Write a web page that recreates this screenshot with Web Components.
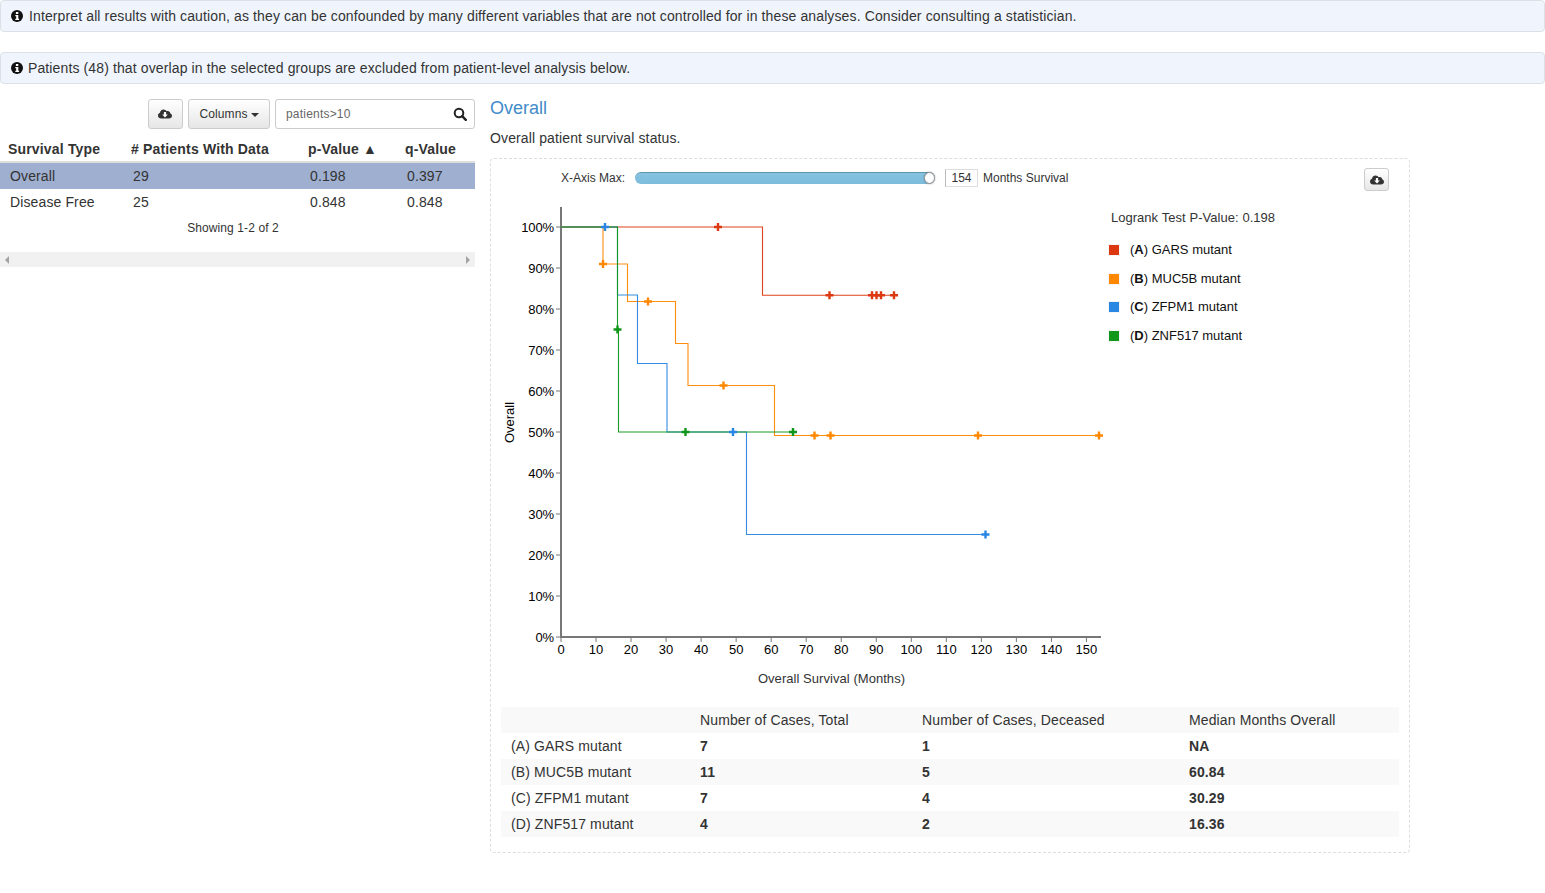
<!DOCTYPE html>
<html>
<head>
<meta charset="utf-8">
<style>
  html, body { margin: 0; background: #fff; }
  body { font-family: "Liberation Sans", Arial, sans-serif; font-size: 14px; color: #333; }
</style>
</head>
<body>
<study-page></study-page>

<script>
const INFO_ICON = `<svg width="12" height="12" viewBox="0 0 12 12"><circle cx="6" cy="6" r="6" fill="#111"/><rect x="4.9" y="2" width="2.4" height="2" fill="#fff"/><path d="M4.3 5h3v3.8h.8V10H4.3V8.8h.9V6.2h-.9z" fill="#fff"/></svg>`;
const CLOUD_ICON = `<svg width="14" height="12" viewBox="0 0 14 12"><path d="M3.2 10.5C1.4 10.5 0 9.2 0 7.5c0-1.3.8-2.4 2-2.8C2.1 2.9 3.6 1.5 5.5 1.5c1.3 0 2.5.7 3.1 1.8.4-.2.8-.3 1.2-.3 1.3 0 2.3 1 2.4 2.2 1 .4 1.8 1.4 1.8 2.6 0 1.7-1.4 2.7-3 2.7z" fill="#333"/><path d="M5.9 4h2.2v2.6h1.7L7 9.4 4.2 6.6h1.7z" fill="#fff"/></svg>`;

class StudyAlert extends HTMLElement {
    connectedCallback() {
        this.attachShadow({ mode: 'open' });
        this.shadowRoot.innerHTML = `
            <style>
                :host {
                    display: flex;
                    align-items: center;
                    box-sizing: border-box;
                    height: 32px;
                    padding: 0 10px;
                    background: #f0f5fd;
                    border: 1px solid #dde1e6;
                    border-radius: 4px;
                    font-size: 14px;
                    letter-spacing: .12px;
                    color: #333;
                }
                svg { margin-right: var(--icon-gap, 6px); flex: none; }
            </style>
            ${INFO_ICON}<slot></slot>
        `;
    }
}

class ToolButton extends HTMLElement {
    connectedCallback() {
        this.attachShadow({ mode: 'open' });
        this.shadowRoot.innerHTML = `
            <style>
                :host {
                    display: inline-flex;
                    align-items: center;
                    justify-content: center;
                    box-sizing: border-box;
                    border: 1px solid #ccc;
                    border-radius: 3px;
                    background: linear-gradient(#fff, #e6e6e6);
                    font-size: 12px;
                    letter-spacing: .1px;
                    color: #333;
                }
            </style>
            <slot></slot>
        `;
    }
}

class SurvivalTable extends HTMLElement {
    connectedCallback() {
        this.attachShadow({ mode: 'open' });
        this.shadowRoot.innerHTML = `
            <style>
                :host { display: block; width: 475px; font-size: 14px; letter-spacing: .12px; color: #333; }
                .toolbar {
                    display: flex;
                    justify-content: flex-end;
                    gap: 5px;
                    height: 30px;
                    margin-bottom: 8px;
                }
                tool-button.dl { width: 35px; height: 30px; }
                tool-button.dl svg { margin-left: -1px; }
                tool-button.cols { width: 82px; height: 30px; }
                .caret {
                    width: 0; height: 0; margin-left: 3px; margin-top: 2px;
                    border-left: 4px solid transparent;
                    border-right: 4px solid transparent;
                    border-top: 4px solid #333;
                }
                .search {
                    box-sizing: border-box;
                    width: 200px;
                    height: 30px;
                    border: 1px solid #ccc;
                    border-radius: 3px;
                    padding: 0 7px 0 10px;
                    display: flex;
                    align-items: center;
                    justify-content: space-between;
                    font-size: 12px;
                    letter-spacing: .2px;
                    color: #666;
                }
                .grid { display: grid; grid-template-columns: 123px 177px 97px 78px; }
                .head {
                    height: 24px;
                    border-bottom: 2px solid #ddd;
                    font-weight: bold;
                    font-size: 14px;
                    letter-spacing: .17px;
                    padding-left: 8px;
                    line-height: 24px;
                    white-space: nowrap;
                }
                .cell { height: 26px; line-height: 27px; padding-left: 10px; white-space: nowrap; }
                .sel { background: #9fafd0; }
                .foot { text-align: center; font-size: 12px; letter-spacing: .1px; line-height: 26px; margin-left: -9px; }
                .scroll {
                    height: 15px;
                    margin-top: 11px;
                    background: #f1f1f1;
                    display: flex;
                    justify-content: space-between;
                    align-items: center;
                    padding: 0 5px;
                }
                .arr { width: 0; height: 0; border-top: 4px solid transparent; border-bottom: 4px solid transparent; }
                .arr.l { border-right: 4px solid #a3a3a3; }
                .arr.r { border-left: 4px solid #a3a3a3; }
            </style>
            <div class="toolbar">
                <tool-button class="dl">${CLOUD_ICON}</tool-button>
                <tool-button class="cols">Columns<span class="caret"></span></tool-button>
                <div class="search">
                    <span>patients&gt;10</span>
                    <svg width="14" height="14" viewBox="0 0 14 14"><circle cx="6" cy="6" r="4.3" fill="none" stroke="#222" stroke-width="2"/><path d="M9.2 9.2l3.6 3.6" stroke="#222" stroke-width="2.4" stroke-linecap="round"/></svg>
                </div>
            </div>
            <div class="grid">
                <div class="head">Survival Type</div>
                <div class="head"># Patients With Data</div>
                <div class="head">p-Value &#9650;</div>
                <div class="head">q-Value</div>
                <div class="cell sel">Overall</div><div class="cell sel">29</div><div class="cell sel">0.198</div><div class="cell sel">0.397</div>
                <div class="cell">Disease Free</div><div class="cell">25</div><div class="cell">0.848</div><div class="cell">0.848</div>
            </div>
            <div class="foot">Showing 1-2 of 2</div>
            <div class="scroll"><span class="arr l"></span><span class="arr r"></span></div>
        `;
    }
}

// viewBox uses the page coordinates of the picture, so the curves read as measured
const SERIES = [
    { color: '#dc3912',
      path: [[561, 227], [762.5, 227], [762.5, 295.3], [894, 295.3]],
      marks: [[718, 227], [829.5, 295.3], [872, 295.3], [876.5, 295.3], [881, 295.3], [894, 295.3]] },
    { color: '#ff8800',
      path: [[561, 227], [603, 227], [603, 264], [627.5, 264], [627.5, 301.5], [675.5, 301.5], [675.5, 343.5], [688, 343.5], [688, 385.5], [774.5, 385.5], [774.5, 435.5], [1099, 435.5]],
      marks: [[603, 264], [648, 301.5], [723.5, 385.5], [814.5, 435.5], [830.5, 435.5], [978, 435.5], [1099, 435.5]] },
    { color: '#2986e2',
      path: [[561, 227], [617.5, 227], [617.5, 295], [637.5, 295], [637.5, 363.5], [667, 363.5], [667, 432], [746.5, 432], [746.5, 534.5], [985.5, 534.5]],
      marks: [[605, 227], [733, 432], [985.5, 534.5]] },
    { color: '#109618',
      path: [[561, 227], [617.5, 227], [617.5, 329.5], [618.5, 329.5], [618.5, 432], [793, 432]],
      marks: [[617.5, 329.5], [685.5, 432], [793, 432]] }
];

class KmPlot extends HTMLElement {
    connectedCallback() {
        this.attachShadow({ mode: 'open' });
        let ticks = '';
        for (let i = 0; i <= 10; i++) {
            const y = 637 - i * 41;
            ticks += `<path d="M556 ${y}h5" stroke="#777"/><text x="554" y="${y + 5}" text-anchor="end" letter-spacing="-.1">${i * 10}%</text>`;
        }
        for (let i = 0; i <= 15; i++) {
            const x = 561 + i * 35.03;
            ticks += `<path d="M${x} 637v5" stroke="#777"/><text x="${x}" y="654" text-anchor="middle">${i * 10}</text>`;
        }
        // censor marks sit above every line
        const lines = SERIES.map(s => {
            const d = 'M' + s.path.map(p => p.join(' ')).join('L');
            return `<path d="${d}" fill="none" stroke="${s.color}" stroke-width="1.1" opacity=".95"/>`;
        }).join('');
        const marks = SERIES.map(s => s.marks.map(([x, y]) =>
            `<path d="M${x - 4} ${y}h8M${x} ${y - 4}v8" stroke="${s.color}" stroke-width="2.4"/>`).join('')).join('');
        this.shadowRoot.innerHTML = `
            <style>
                :host { display: block; width: 604px; height: 500px; flex: none; }
                svg { display: block; font-family: "Liberation Sans", Arial, sans-serif; font-size: 13px; }
            </style>
            <svg width="604" height="500" viewBox="501 197 604 500">
                <path d="M561 207V637H1101" fill="none" stroke="#777" stroke-width="2"/>
                ${ticks}
                ${lines}
                ${marks}
                <text x="514" y="422.5" transform="rotate(-90 514 422.5)" text-anchor="middle" font-size="13">Overall</text>
                <text x="831.5" y="683" text-anchor="middle" fill="#333" letter-spacing=".05">Overall Survival (Months)</text>
            </svg>
        `;
    }
}

class KmLegend extends HTMLElement {
    connectedCallback() {
        this.attachShadow({ mode: 'open' });
        const rows = [['A', 'GARS', '#dc3912'], ['B', 'MUC5B', '#ff8800'], ['C', 'ZFPM1', '#2986e2'], ['D', 'ZNF517', '#109618']];
        this.shadowRoot.innerHTML = `
            <style>
                :host { display: block; font-size: 13px; color: #111; padding-left: 4px; }
                .rank { color: #333; margin: 0 0 0 2px; line-height: 16px; padding-top: 13px; margin-bottom: 9px; word-spacing: .4px; }
                .row { display: flex; align-items: center; height: 28.7px; }
                .box { width: 10px; height: 10px; margin: 1px 11px 0 0; outline: 1px solid rgba(0,0,0,.04); }
            </style>
            <div class="rank">Logrank Test P-Value: 0.198</div>
            ${rows.map(r => `<div class="row"><span class="box" style="background:${r[2]}"></span><span>(<b>${r[0]}</b>) ${r[1]} mutant</span></div>`).join('')}
        `;
    }
}

class XSlider extends HTMLElement {
    connectedCallback() {
        this.attachShadow({ mode: 'open' });
        this.shadowRoot.innerHTML = `
            <style>
                :host { display: flex; align-items: center; height: 38px; font-size: 12px; color: #333; padding-left: 60px; }
                .track {
                    position: relative;
                    box-sizing: border-box;
                    width: 300px;
                    height: 12px;
                    margin: 0 10px;
                    border-radius: 6px;
                    background: linear-gradient(#86c3e1, #7dbcdc);
                    border-top: 1px solid #5d95ad;
                }
                .knob {
                    position: absolute;
                    right: 0;
                    top: -1px;
                    box-sizing: border-box;
                    width: 11px;
                    height: 12px;
                    border-radius: 50%;
                    background: #fff;
                    border: 1px solid #999;
                    box-shadow: 0 0 2px rgba(0,0,0,.35);
                }
                .val {
                    box-sizing: border-box;
                    width: 33px;
                    height: 18px;
                    line-height: 16px;
                    text-align: center;
                    border: 1px solid #ddd;
                    border-left-color: #bbb;
                    margin-right: 5px;
                }
                tool-button { position: absolute; left: 873px; top: 9px; width: 25px; height: 23px; }
            </style>
            <span>X-Axis Max:</span>
            <div class="track"><span class="knob"></span></div>
            <div class="val">154</div>
            <span>Months Survival</span>
            <tool-button>${CLOUD_ICON}</tool-button>
        `;
    }
}

class StatsTable extends HTMLElement {
    connectedCallback() {
        this.attachShadow({ mode: 'open' });
        const data = [['(A) GARS mutant', '7', '1', 'NA'], ['(B) MUC5B mutant', '11', '5', '60.84'], ['(C) ZFPM1 mutant', '7', '4', '30.29'], ['(D) ZNF517 mutant', '4', '2', '16.36']];
        this.shadowRoot.innerHTML = `
            <style>
                :host { display: block; font-size: 14px; letter-spacing: .12px; color: #333; }
                .row { display: grid; grid-template-columns: 189px 222px 267px 220px; height: 26px; line-height: 27px; }
                .row:nth-child(even) { background: #f9f9f9; }
                .row span { padding-left: 10px; white-space: nowrap; }
            </style>
            <div class="row"><span></span><span>Number of Cases, Total</span><span>Number of Cases, Deceased</span><span>Median Months Overall</span></div>
            ${data.map(r => `<div class="row"><span>${r[0]}</span><span><b>${r[1]}</b></span><span><b>${r[2]}</b></span><span><b>${r[3]}</b></span></div>`).join('')}
        `;
    }
}

class StudyPage extends HTMLElement {
    connectedCallback() {
        this.attachShadow({ mode: 'open' });
        this.shadowRoot.innerHTML = `
            <style>
                :host { display: block; width: 1545px; }
                study-alert + study-alert { margin-top: 20px; --icon-gap: 5px; }
                .main { display: flex; gap: 15px; margin-top: 15px; }
                .right { width: 920px; }
                h4 { margin: 0; font-size: 18px; font-weight: normal; line-height: 18px; color: #428bca; }
                p { margin: 13px 0 0; font-size: 14px; letter-spacing: .12px; line-height: 16px; color: #333; }
                .card {
                    position: relative;
                    box-sizing: border-box;
                    height: 695px;
                    margin-top: 12px;
                    padding: 0 10px;
                    border: 1px dashed #ddd;
                    border-radius: 4px;
                }
                .chart { display: flex; height: 510px; }
            </style>
            <study-alert>Interpret all results with caution, as they can be confounded by many different variables that are not controlled for in these analyses. Consider consulting a statistician.</study-alert>
            <study-alert>Patients (48) that overlap in the selected groups are excluded from patient-level analysis below.</study-alert>
            <div class="main">
                <survival-table></survival-table>
                <div class="right">
                    <h4>Overall</h4>
                    <p>Overall patient survival status.</p>
                    <div class="card">
                        <x-slider></x-slider>
                        <div class="chart">
                            <km-plot></km-plot>
                            <km-legend></km-legend>
                        </div>
                        <stats-table></stats-table>
                    </div>
                </div>
            </div>
        `;
    }
}

customElements.define('study-alert', StudyAlert);
customElements.define('tool-button', ToolButton);
customElements.define('survival-table', SurvivalTable);
customElements.define('km-plot', KmPlot);
customElements.define('km-legend', KmLegend);
customElements.define('x-slider', XSlider);
customElements.define('stats-table', StatsTable);
customElements.define('study-page', StudyPage);
</script>
</body>
</html>
